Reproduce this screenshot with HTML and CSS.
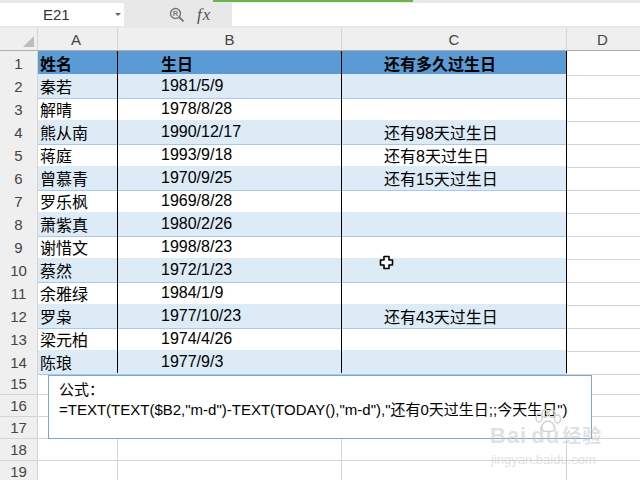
FILE: index.html
```html
<!DOCTYPE html>
<html>
<head>
<meta charset="utf-8">
<link rel="stylesheet" href="styles.css">
</head>
<body>
<div class="app">
  <div class="fbar">
    <div class="accent"></div>
    <div class="fbar-row">
      <div class="namebox"><span class="ref">E21</span><span class="caret"></span></div>
      <div class="tools">
        <svg class="zoomicon" width="16" height="16" viewBox="0 0 16 16"><circle cx="6.5" cy="6.5" r="5" fill="none" stroke="#777" stroke-width="1.4"/><line x1="10" y1="10" x2="14.5" y2="14.5" stroke="#777" stroke-width="1.8"/><text x="6.5" y="9.3" font-size="7.5" text-anchor="middle" fill="#777" font-family="Liberation Sans" font-weight="bold">R</text></svg>
        <span class="fx">fx</span>
      </div>
      <div class="finput"></div>
    </div>
  </div>
  <div class="sheet">
    <div class="row colhead"><div class="c rh corner"><span class="tri"></span></div><div class="c a">A</div><div class="c b">B</div><div class="c cc">C</div><div class="c d">D</div></div>
    <div class="row t head"><div class="c rh">1</div><div class="c a">姓名</div><div class="c b">生日</div><div class="c cc">还有多久过生日</div><div class="c d"></div></div>
    <div class="row t alt"><div class="c rh">2</div><div class="c a">秦若</div><div class="c b">1981/5/9</div><div class="c cc"></div><div class="c d"></div></div>
    <div class="row t"><div class="c rh">3</div><div class="c a">解晴</div><div class="c b">1978/8/28</div><div class="c cc"></div><div class="c d"></div></div>
    <div class="row t alt"><div class="c rh">4</div><div class="c a">熊从南</div><div class="c b">1990/12/17</div><div class="c cc">还有98天过生日</div><div class="c d"></div></div>
    <div class="row t"><div class="c rh">5</div><div class="c a">蒋庭</div><div class="c b">1993/9/18</div><div class="c cc">还有8天过生日</div><div class="c d"></div></div>
    <div class="row t alt"><div class="c rh">6</div><div class="c a">曾慕青</div><div class="c b">1970/9/25</div><div class="c cc">还有15天过生日</div><div class="c d"></div></div>
    <div class="row t"><div class="c rh">7</div><div class="c a">罗乐枫</div><div class="c b">1969/8/28</div><div class="c cc"></div><div class="c d"></div></div>
    <div class="row t alt"><div class="c rh">8</div><div class="c a">萧紫真</div><div class="c b">1980/2/26</div><div class="c cc"></div><div class="c d"></div></div>
    <div class="row t"><div class="c rh">9</div><div class="c a">谢惜文</div><div class="c b">1998/8/23</div><div class="c cc"></div><div class="c d"></div></div>
    <div class="row t alt"><div class="c rh">10</div><div class="c a">蔡然</div><div class="c b">1972/1/23</div><div class="c cc"></div><div class="c d"></div></div>
    <div class="row t"><div class="c rh">11</div><div class="c a">余雅绿</div><div class="c b">1984/1/9</div><div class="c cc"></div><div class="c d"></div></div>
    <div class="row t alt"><div class="c rh">12</div><div class="c a">罗枭</div><div class="c b">1977/10/23</div><div class="c cc">还有43天过生日</div><div class="c d"></div></div>
    <div class="row t"><div class="c rh">13</div><div class="c a">梁元柏</div><div class="c b">1974/4/26</div><div class="c cc"></div><div class="c d"></div></div>
    <div class="row t alt"><div class="c rh">14</div><div class="c a">陈琅</div><div class="c b">1977/9/3</div><div class="c cc"></div><div class="c d"></div></div>
    <div class="row e"><div class="c rh">15</div><div class="c a"></div><div class="c b"></div><div class="c cc"></div><div class="c d"></div></div>
    <div class="row e"><div class="c rh">16</div><div class="c a"></div><div class="c b"></div><div class="c cc"></div><div class="c d"></div></div>
    <div class="row e"><div class="c rh">17</div><div class="c a"></div><div class="c b"></div><div class="c cc"></div><div class="c d"></div></div>
    <div class="row e"><div class="c rh">18</div><div class="c a"></div><div class="c b"></div><div class="c cc"></div><div class="c d"></div></div>
    <div class="row e"><div class="c rh">19</div><div class="c a"></div><div class="c b"></div><div class="c cc"></div><div class="c d"></div></div>
  </div>

  <div class="comment">
    <div>公式：</div>
    <div>=TEXT(TEXT($B2,"m-d")-TEXT(TODAY(),"m-d"),"还有0天过生日;;今天生日")</div>
  </div>

  <svg class="cursor" width="15" height="15" viewBox="0 0 15 15"><path d="M5 1.5h5v3.5h3.5v5h-3.5v3.5h-5v-3.5h-3.5v-5h3.5z" fill="#fff" stroke="#000" stroke-width="1.6" stroke-linejoin="round"/></svg>

  <div class="watermark">
    <svg class="paw" width="30" height="24" viewBox="0 0 30 24"><g fill="none" stroke="#d2d2d2" stroke-width="1.5"><ellipse cx="7" cy="9" rx="3" ry="4"/><ellipse cx="13" cy="4.5" rx="3" ry="3.8"/><ellipse cx="20" cy="4.5" rx="3" ry="3.8"/><ellipse cx="25.5" cy="10" rx="3" ry="4"/><path d="M9 21c0-6 4-9 7-9s7 3 7 9c-3 2-11 2-14 0z"/></g></svg>
    <div class="wm-big"><span>Bai</span><span class="du">du</span><span class="jy">经验</span></div>
    <div class="wm-small">jingyan.baidu.com</div>
  </div>
</div>
</body>
</html>
```
FILE: styles.css
```css
html, body {
  margin: 0;
  padding: 0;
}
body {
  width: 640px;
  height: 480px;
  overflow: hidden;
  background: #ffffff;
  font-family: "Liberation Sans", "Noto Sans CJK SC", sans-serif;
}
.app {
  position: relative;
  width: 640px;
  height: 480px;
  overflow: hidden;
}

/* formula bar */
.fbar {
  height: 28px;
  background: #e8e8e8;
  box-sizing: border-box;
}
.accent {
  height: 2px;
  width: 200px;
  margin-left: 213px;
  background: #6fb34a;
}
.fbar-row {
  display: flex;
  height: 23px;
  margin-top: 1px;
}
.namebox {
  width: 124px;
  background: #fff;
  display: flex;
  align-items: center;
  position: relative;
}
.ref {
  margin-left: 43px;
  font-size: 15px;
  color: #333;
}
.caret {
  margin-left: auto;
  margin-right: 3px;
  width: 0;
  height: 0;
  border-left: 3px solid transparent;
  border-right: 3px solid transparent;
  border-top: 3px solid #666;
}
.tools {
  width: 108px;
  display: flex;
  align-items: center;
}
.zoomicon {
  margin-left: 45px;
}
.fx {
  margin-left: 12px;
  font-family: "Liberation Serif", serif;
  font-style: italic;
  font-size: 17px;
  color: #555;
  letter-spacing: 1px;
}
.finput {
  flex: 1;
  background: #fff;
}

/* sheet */
.row {
  display: grid;
  grid-template-columns: 38px 80px 224px 225px 80px;
  height: 23px;
}
.row.e {
  height: 22px;
}
.c {
  box-sizing: border-box;
  display: flex;
  align-items: center;
  border-right: 1px solid #d4d4d4;
  border-bottom: 1px solid #d4d4d4;
  font-size: 16px;
  color: #000;
  white-space: nowrap;
}
.c.rh {
  background: #efefef;
  justify-content: center;
  color: #444;
  font-size: 15px;
}
.colhead .c {
  background: #efefef;
  justify-content: center;
  color: #444;
  font-size: 15px;
  border-bottom-color: #aeaeae;
}
.colhead .c.a { padding-right: 3px; }
.colhead .c.d { padding-right: 8px; }
.corner {
  position: relative;
}
.tri {
  position: absolute;
  right: 3px;
  bottom: 3px;
  width: 0;
  height: 0;
  border-left: 11px solid transparent;
  border-bottom: 11px solid #bdbdbd;
}
.t .c.a, .t .c.b, .t .c.cc {
  border-right-color: #000;
  border-bottom-color: #a9c8ea;
}
.t .c.d {
  border-right: none;
}
.e .c.d {
  border-right: none;
}
.t .c.a {
  padding-left: 2px;
}
.t .c.b {
  padding-left: 43px;
}
.t .c.cc {
  padding-left: 42px;
}
.t.alt .c.a, .t.alt .c.b, .t.alt .c.cc {
  background: #ddebf7;
}
.t.head .c.a, .t.head .c.b, .t.head .c.cc {
  background: #5b9bd5;
  font-weight: bold;
}

/* overlays */
.comment {
  position: absolute;
  left: 48px;
  top: 375px;
  width: 544px;
  height: 64px;
  box-sizing: border-box;
  border: 1px solid #7ba7d8;
  background: #fff;
  padding: 4px 0 0 10px;
  font-size: 15px;
  line-height: 20px;
  color: #000;
  white-space: nowrap;
}
.cursor {
  position: absolute;
  left: 379px;
  top: 255px;
}
.watermark {
  position: absolute;
  left: 490px;
  top: 406px;
  width: 130px;
  color: rgba(195, 195, 195, 0.5);
}
.paw {
  position: absolute;
  left: 42px;
  top: 3px;
}
.wm-big {
  margin-top: 18px;
  font-size: 22px;
  font-weight: bold;
  line-height: 24px;
  letter-spacing: 1px;
}
.wm-big .du {
  margin-left: 4px;
}
.wm-big .jy {
  margin-left: 2px;
  font-size: 19px;
}
.wm-small {
  font-size: 13px;
  line-height: 16px;
  margin-top: 3px;
  margin-left: 1px;
}
```
